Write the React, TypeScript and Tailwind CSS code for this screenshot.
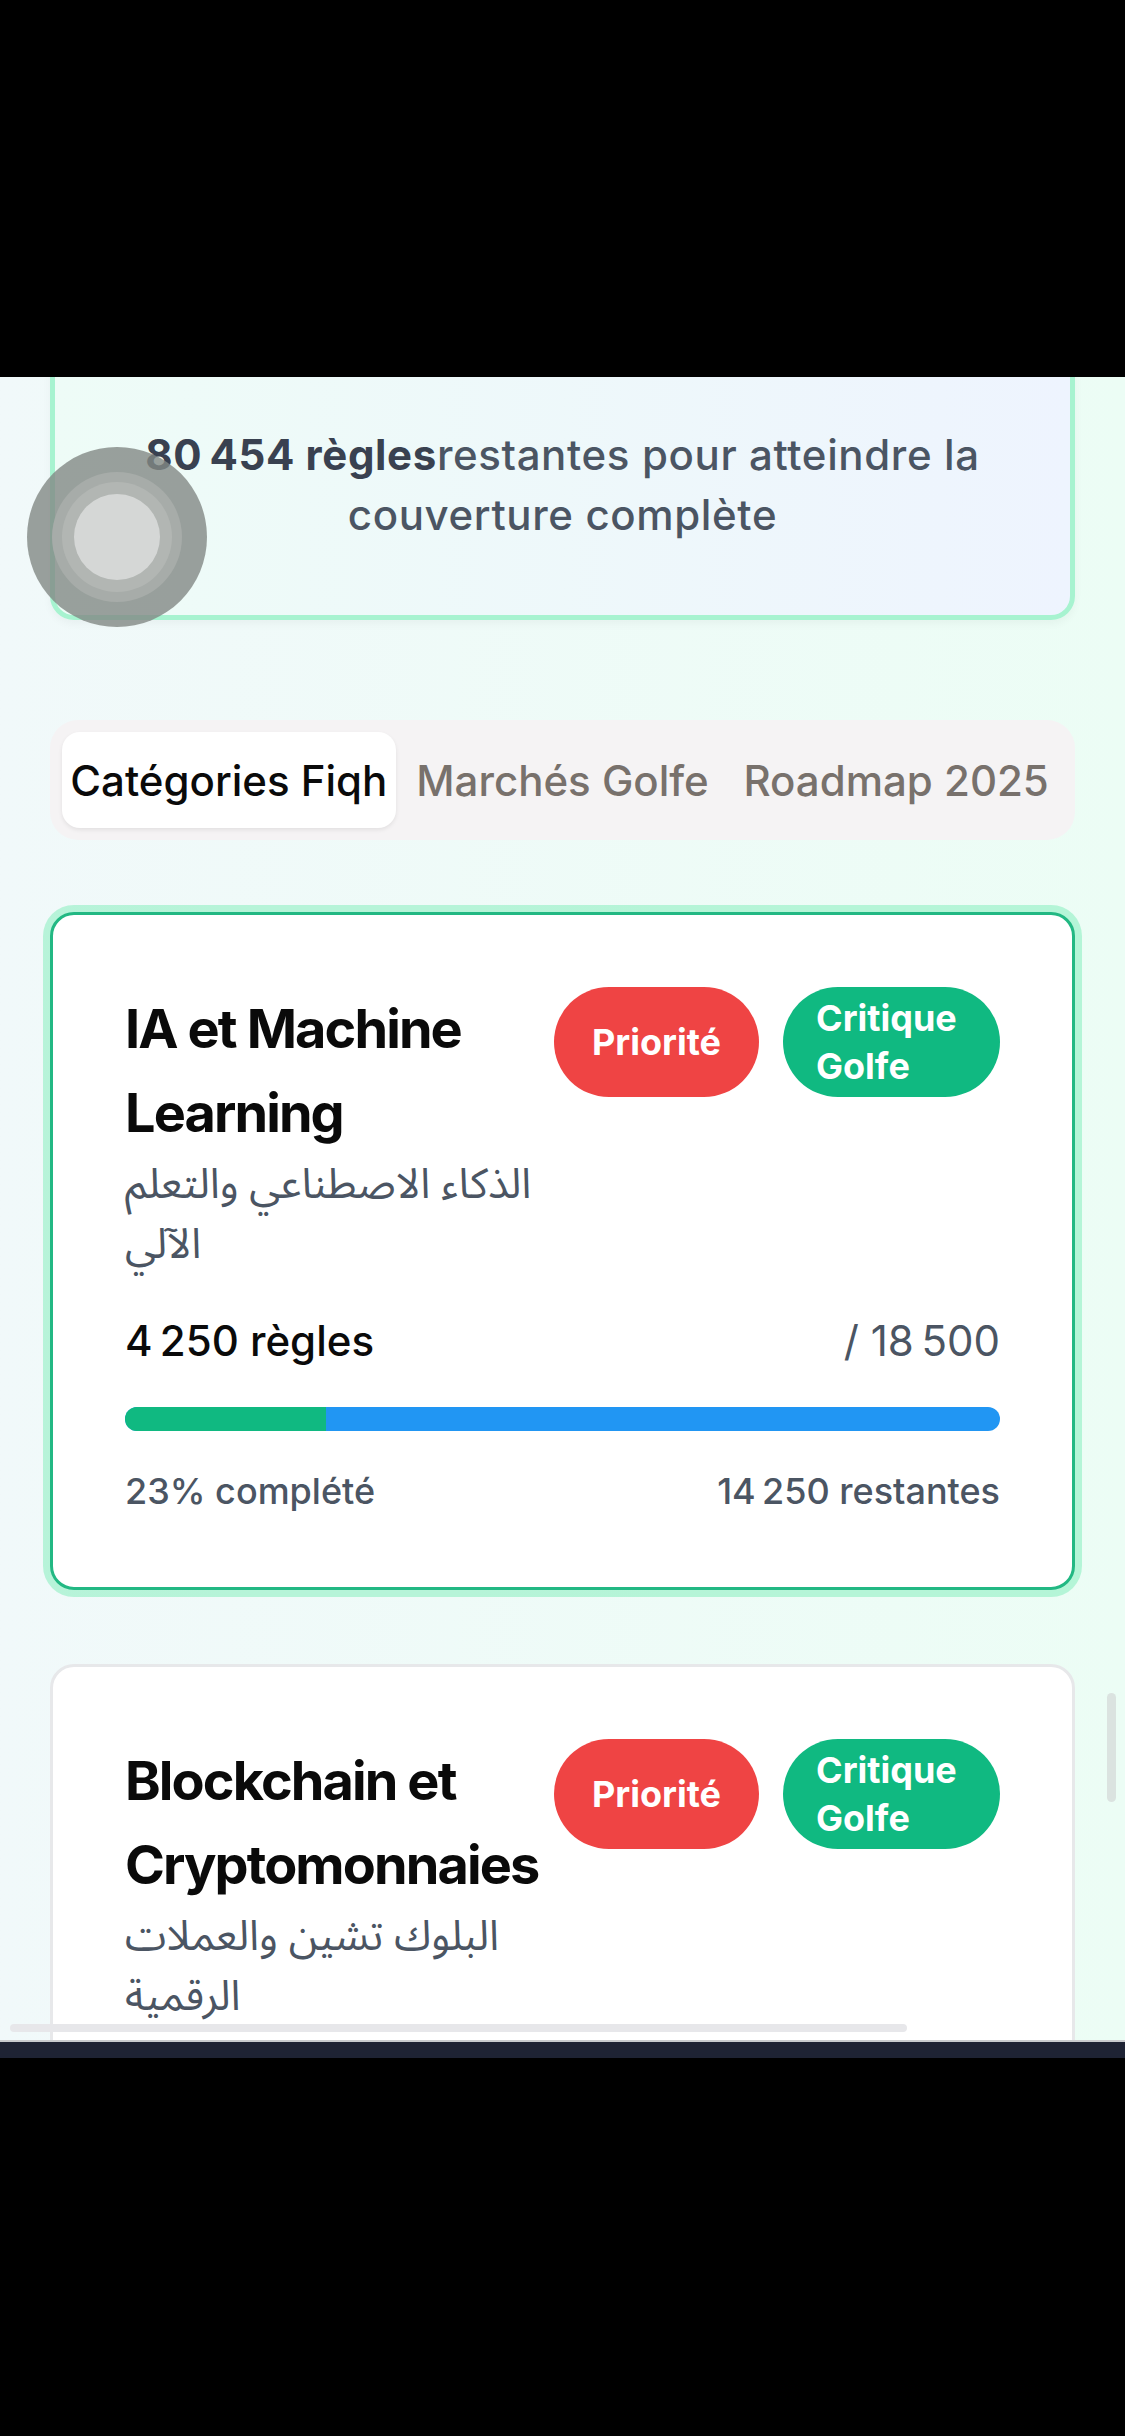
import React from "react";

const latin = { fontFamily: "Inter, 'Noto Sans', 'DejaVu Sans', sans-serif" };
const arabic = { fontFamily: "'Noto Sans Arabic', 'DejaVu Sans', 'Noto Sans', sans-serif" };

type Cat = {
  title: string;
  ar: string;
  total: string;
  doneLabel: string;
  remaining: string;
  pct: number;
  active?: boolean;
};

const cats: Cat[] = [
  {
    title: "IA et Machine Learning",
    ar: "الذكاء الاصطناعي والتعلم الآلي",
    doneLabel: "4\u202f250 règles",
    total: "/ 18\u202f500",
    remaining: "14\u202f250 restantes",
    pct: 23,
    active: true,
  },
  {
    title: "Blockchain et Cryptomonnaies",
    ar: "البلوك تشين والعملات الرقمية",
    doneLabel: "3\u202f100 règles",
    total: "/ 12\u202f000",
    remaining: "8\u202f900 restantes",
    pct: 26,
  },
];

function Card({ c, first }: { c: Cat; first: boolean }) {
  return (
    <div
      className={
        "shrink-0 rounded-[24px] bg-white px-[72px] pt-[72px] pb-[72px] border-[3px] " +
        (c.active
          ? "border-[#22b883] shadow-[0_0_0_7px_rgba(134,239,190,0.55)]"
          : "border-[#e7e8ea]") +
        (first ? " mt-[72px]" : " mt-[74px]")
      }
    >
      <div className="flex items-start">
        <div className="flex-1 min-w-0">
          <div className="text-[54px] leading-[84px] font-bold tracking-[-0.035em] text-[#0a0a0a]">
            {c.title}
          </div>
          <div className="text-[42px] leading-[60px] text-[#4b5563]" style={arabic}>
            {c.ar}
          </div>
        </div>
        <div className="flex gap-[24px] shrink-0 items-stretch">
          <div className="flex items-center rounded-full bg-[#ef4444] px-[38px] text-white text-[36px] leading-[48px] font-bold">
            Priorité
          </div>
          <div className="w-[217px] rounded-full bg-[#10b981] px-[33px] py-[7px] text-white text-[36px] leading-[48px] font-bold">
            Critique Golfe
          </div>
        </div>
      </div>
      <div className="mt-[36px] flex justify-between text-[42px] leading-[60px]">
        <span className="font-medium text-[#0a0a0a]">{c.doneLabel}</span>
        <span className="text-[#4b5563]">{c.total}</span>
      </div>
      <div className="mt-[36px] h-[24px] rounded-full bg-[#2196f3] overflow-hidden">
        <div className="h-full bg-[#10b981]" style={{ width: `${c.pct}%` }} />
      </div>
      <div className="mt-[36px] flex justify-between text-[36px] leading-[48px] font-medium text-[#4b5563]">
        <span>{c.pct}% complété</span>
        <span>{c.remaining}</span>
      </div>
    </div>
  );
}

export default function App() {
  return (
    <div className="w-[1125px] h-[2436px] bg-black flex flex-col overflow-hidden" style={latin}>
      <div className="h-[377px] shrink-0 bg-black" />
      <div className="relative h-[1663px] shrink-0 overflow-hidden bg-gradient-to-r from-[#f1f9fa] to-[#ecfdf5]">
        <div className="flex flex-col px-[50px] -mt-[30px]">
          <div className="shrink-0 rounded-[24px] border-[5px] border-[#a7f3d0] bg-gradient-to-r from-[#eefcf7] to-[#eef4fe] px-[50px] pt-[73px] pb-[70px] text-center text-[42px] leading-[60px] tracking-[0.015em] shadow-[0_4px_8px_rgba(0,0,0,0.04)]">
            <span className="font-bold text-[#394150]">80{"\u202f"}454 règles</span>
            <span className="font-medium text-[#4b5563]">restantes pour atteindre la couverture complète</span>
          </div>

          <div className="mt-[100px] shrink-0 grid grid-cols-3 rounded-[28px] bg-[#f5f3f4] p-[12px] text-[42px] font-medium">
            <div className="h-[96px] flex items-center justify-center rounded-[18px] bg-white text-[#0a0a0a] shadow-[0_2px_4px_rgba(0,0,0,0.08)] whitespace-nowrap">
              Catégories Fiqh
            </div>
            <div className="h-[96px] flex items-center justify-center text-[#78716c] whitespace-nowrap">
              Marchés Golfe
            </div>
            <div className="h-[96px] flex items-center justify-center text-[#78716c] whitespace-nowrap">
              Roadmap 2025
            </div>
          </div>

          {cats.map((c, i) => (
            <Card key={c.title} c={c} first={i === 0} />
          ))}
        </div>

        {/* assistive touch button */}
        <div className="absolute left-[27px] top-[70px] w-[180px] h-[180px] rounded-full bg-[rgba(130,136,132,0.8)] flex items-center justify-center">
          <div className="w-[130px] h-[130px] rounded-full bg-[#a7aca9] flex items-center justify-center">
            <div className="w-[110px] h-[110px] rounded-full bg-[#b2b6b3] flex items-center justify-center">
              <div className="w-[86px] h-[86px] rounded-full bg-[#d5d7d6]" />
            </div>
          </div>
        </div>

        {/* scroll indicators */}
        <div className="absolute right-[9px] top-[1316px] w-[9px] h-[109px] rounded-full bg-[#dbe3e0]" />
        <div className="absolute left-[10px] top-[1647px] w-[897px] h-[8px] rounded-full bg-[#e7e7ea]" />
      </div>
      <div className="h-[2px] shrink-0 bg-[#c9cbce]" />
      <div className="h-[16px] shrink-0 bg-[#1e2334]" />
      <div className="flex-1 bg-black" />
    </div>
  );
}
